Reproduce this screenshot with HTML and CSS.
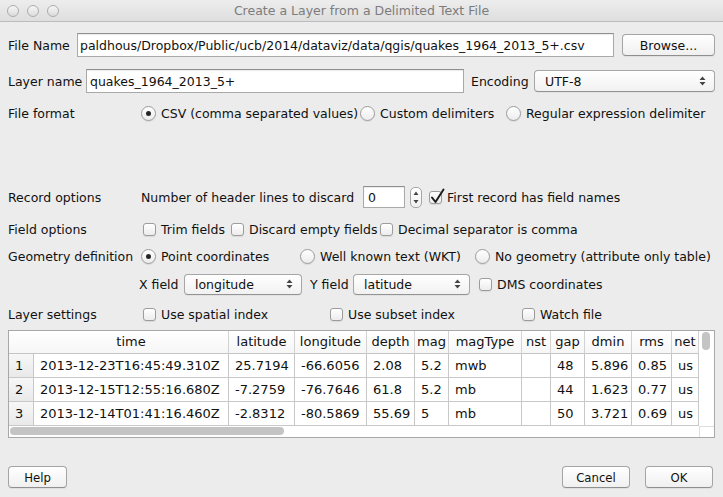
FILE: index.html
```html
<!DOCTYPE html>
<html>
<head>
<meta charset="utf-8">
<link rel="stylesheet" href="styles.css">
</head>
<body>
<div class="titlebar">
  <div class="lights"><span class="light"></span><span class="light"></span><span class="light"></span></div>
  <div class="title">Create a Layer from a Delimited Text File</div>
  <div></div>
</div>
<div class="content">
  <div class="row r-file">
    <span class="lbl lbl-file">File Name</span>
    <div class="input file-input"><span>paldhous/Dropbox/Public/ucb/2014/dataviz/data/qgis/quakes_1964_2013_5+.csv</span></div>
    <button class="btn browse">Browse...</button>
  </div>
  <div class="row r-layer">
    <span class="lbl lbl-layer">Layer name</span>
    <div class="input layer-input"><span>quakes_1964_2013_5+</span></div>
    <span class="lbl lbl-enc">Encoding</span>
    <div class="select enc-select"><span>UTF-8</span><svg class="updown" width="7" height="10" viewBox="0 0 7 10"><path d="M0.5 4 L3.5 0.5 L6.5 4 Z M0.5 6 L3.5 9.5 L6.5 6 Z"/></svg></div>
  </div>
  <div class="grow r-format">
    <span class="lbl">File format</span>
    <div class="opts">
      <div class="opt w-csv"><span class="radio on"></span>CSV (comma separated values)</div>
      <div class="opt w-custom"><span class="radio"></span>Custom delimiters</div>
      <div class="opt"><span class="radio"></span>Regular expression delimiter</div>
    </div>
  </div>
  <div class="grow r-record">
    <span class="lbl">Record options</span>
    <div class="opts">
      <span class="hdr-text">Number of header lines to discard</span>
      <div class="input spin-input"><span>0</span></div>
      <div class="spin-arrows"><svg width="10" height="19" viewBox="0 0 10 19"><path d="M2.5 7 L5 3.5 L7.5 7 Z M2.5 12 L5 15.5 L7.5 12 Z"/></svg></div>
      <div class="opt first-rec"><span class="check"><svg class="tick" width="16" height="18" viewBox="0 0 16 18"><path d="M3 9.5 L6.5 14 L14.5 1.5"/></svg></span>First record has field names</div>
    </div>
  </div>
  <div class="grow r-field">
    <span class="lbl">Field options</span>
    <div class="opts">
      <div class="opt w-trim"><span class="check"></span>Trim fields</div>
      <div class="opt w-discard"><span class="check"></span>Discard empty fields</div>
      <div class="opt"><span class="check"></span>Decimal separator is comma</div>
    </div>
  </div>
  <div class="grow r-geom">
    <span class="lbl">Geometry definition</span>
    <div class="opts">
      <div class="opt w-point"><span class="radio on"></span>Point coordinates</div>
      <div class="opt w-wkt"><span class="radio"></span>Well known text (WKT)</div>
      <div class="opt"><span class="radio"></span>No geometry (attribute only table)</div>
    </div>
  </div>
  <div class="grow r-xy">
    <span class="lbl"></span>
    <div class="opts xy-opts">
      <span class="xy-lbl">X field</span>
      <div class="select x-select"><span>longitude</span><svg class="updown" width="7" height="10" viewBox="0 0 7 10"><path d="M0.5 4 L3.5 0.5 L6.5 4 Z M0.5 6 L3.5 9.5 L6.5 6 Z"/></svg></div>
      <span class="xy-lbl y-lbl">Y field</span>
      <div class="select y-select"><span>latitude</span><svg class="updown" width="7" height="10" viewBox="0 0 7 10"><path d="M0.5 4 L3.5 0.5 L6.5 4 Z M0.5 6 L3.5 9.5 L6.5 6 Z"/></svg></div>
      <div class="opt dms"><span class="check"></span>DMS coordinates</div>
    </div>
  </div>
  <div class="grow r-layerset">
    <span class="lbl">Layer settings</span>
    <div class="opts">
      <div class="opt w-spatial"><span class="check"></span>Use spatial index</div>
      <div class="opt w-subset"><span class="check"></span>Use subset index</div>
      <div class="opt"><span class="check"></span>Watch file</div>
    </div>
  </div>
  <div class="table-wrap">
    <div class="grid">
      <div class="hc corner"></div>
      <div class="hc">time</div>
      <div class="hc">latitude</div>
      <div class="hc">longitude</div>
      <div class="hc">depth</div>
      <div class="hc">mag</div>
      <div class="hc">magType</div>
      <div class="hc">nst</div>
      <div class="hc">gap</div>
      <div class="hc">dmin</div>
      <div class="hc">rms</div>
      <div class="hc">net</div>

      <div class="rh">1</div>
      <div class="c">2013-12-23T16:45:49.310Z</div>
      <div class="c">25.7194</div>
      <div class="c">-66.6056</div>
      <div class="c">2.08</div>
      <div class="c">5.2</div>
      <div class="c">mwb</div>
      <div class="c"></div>
      <div class="c">48</div>
      <div class="c">5.896</div>
      <div class="c">0.85</div>
      <div class="c">us</div>

      <div class="rh">2</div>
      <div class="c">2013-12-15T12:55:16.680Z</div>
      <div class="c">-7.2759</div>
      <div class="c">-76.7646</div>
      <div class="c">61.8</div>
      <div class="c">5.2</div>
      <div class="c">mb</div>
      <div class="c"></div>
      <div class="c">44</div>
      <div class="c">1.623</div>
      <div class="c">0.77</div>
      <div class="c">us</div>

      <div class="rh">3</div>
      <div class="c">2013-12-14T01:41:16.460Z</div>
      <div class="c">-2.8312</div>
      <div class="c">-80.5869</div>
      <div class="c">55.69</div>
      <div class="c">5</div>
      <div class="c">mb</div>
      <div class="c"></div>
      <div class="c">50</div>
      <div class="c">3.721</div>
      <div class="c">0.69</div>
      <div class="c">us</div>
    </div>
    <div class="vscroll"><div class="vthumb"></div></div>
    <div class="hscroll"><div class="hthumb"></div></div>
    <div class="corner-box"></div>
  </div>
  <div class="actions">
    <button class="btn act help">Help</button>
    <div class="spacer"></div>
    <button class="btn act cancel">Cancel</button>
    <button class="btn act ok">OK</button>
  </div>
</div>
</body>
</html>
```
FILE: styles.css
```css
html, body {
  margin: 0;
  padding: 0;
}
body {
  width: 723px;
  height: 497px;
  overflow: hidden;
  background: #ececec;
  font-family: "DejaVu Sans", "Liberation Sans", sans-serif;
  font-size: 12.5px;
  color: #111;
}

/* title bar */
.titlebar {
  height: 21px;
  border-bottom: 1px solid #bcbcbc;
  background: linear-gradient(#ededed, #dedede);
  display: grid;
  grid-template-columns: 1fr auto 1fr;
  align-items: center;
}
.lights {
  display: flex;
  gap: 8px;
  padding-left: 7px;
}
.light {
  width: 12px;
  height: 12px;
  box-sizing: border-box;
  border-radius: 50%;
  border: 1px solid #acacac;
  background: linear-gradient(#f6f6f6, #dcdcdc);
}
.title {
  color: #7c7c7c;
  font-size: 12.5px;
}

/* content */
.content {
  padding: 0 8px;
  display: flex;
  flex-direction: column;
}
.row {
  display: flex;
  align-items: center;
}
.grow {
  display: grid;
  grid-template-columns: 133px 1fr;
  align-items: center;
}
.lbl {
  white-space: nowrap;
}
.opts {
  display: flex;
  align-items: center;
  white-space: nowrap;
}
.opt {
  display: flex;
  align-items: center;
  flex: none;
}

.r-file { margin-top: 11px; height: 24px; }
.r-layer { margin-top: 12px; height: 24px; }
.r-format { margin-top: 10px; height: 20px; }
.r-record { margin-top: 63px; height: 22px; }
.r-field { margin-top: 11px; height: 20px; }
.r-geom { margin-top: 7px; height: 20px; }
.r-xy { margin-top: 7px; height: 22px; }
.r-layerset { margin-top: 9px; height: 20px; }

/* inputs */
.input {
  box-sizing: border-box;
  background: #fff;
  border: 1px solid #a9a9a9;
  border-top-color: #8f8f8f;
  box-shadow: inset 0 1px 1px rgba(0, 0, 0, 0.08);
  display: flex;
  align-items: center;
  overflow: hidden;
  white-space: nowrap;
}
.lbl-file { width: 69px; flex: none; }
.file-input {
  flex: 1;
  height: 24px;
  padding-left: 2px;
}
.browse {
  margin-left: 8px;
  width: 93px;
  height: 22px;
  flex: none;
}
.lbl-layer { width: 78px; flex: none; }
.layer-input {
  width: 378px;
  flex: none;
  height: 24px;
  padding-left: 3px;
}
.lbl-enc {
  margin-left: 7px;
  width: 63px;
  flex: none;
}
.enc-select {
  flex: 1;
}

/* select / popup button */
.select {
  box-sizing: border-box;
  height: 22px;
  border: 1px solid #a6a6a6;
  border-bottom-color: #939393;
  border-radius: 4px;
  background: linear-gradient(#ffffff, #f1f1f1);
  box-shadow: 0 1px 0 rgba(0, 0, 0, 0.04);
  display: flex;
  align-items: center;
  justify-content: space-between;
  padding: 0 8px 0 10px;
  white-space: nowrap;
}
.updown path {
  fill: #444;
}

/* radio / check */
.radio {
  width: 15px;
  height: 15px;
  box-sizing: border-box;
  border-radius: 50%;
  border: 1px solid #9c9c9c;
  background: linear-gradient(#ffffff, #ececec);
  box-shadow: 0 1px 1px rgba(0, 0, 0, 0.08);
  margin-right: 5px;
  display: flex;
  align-items: center;
  justify-content: center;
  flex: none;
}
.radio.on::after {
  content: "";
  width: 5px;
  height: 5px;
  border-radius: 50%;
  background: #262626;
}
.check {
  position: relative;
  width: 13px;
  height: 13px;
  box-sizing: border-box;
  border-radius: 3px;
  border: 1px solid #9c9c9c;
  background: linear-gradient(#ffffff, #ececec);
  box-shadow: 0 1px 1px rgba(0, 0, 0, 0.08);
  margin: 0 5px 0 2px;
  flex: none;
}
.tick {
  position: absolute;
  left: -1px;
  top: -4px;
}
.tick path {
  fill: none;
  stroke: #1e1e1e;
  stroke-width: 2;
  stroke-linecap: round;
  stroke-linejoin: round;
}

/* option widths */
.w-csv { width: 219px; }
.w-custom { width: 146px; }
.w-trim { width: 88px; }
.w-discard { width: 149px; }
.w-point { width: 159px; }
.w-wkt { width: 175px; }
.w-spatial { width: 187px; }
.w-subset { width: 192px; }

.hdr-text {
  width: 222px;
  flex: none;
}
.spin-input {
  width: 42px;
  height: 22px;
  padding-left: 4px;
  flex: none;
}
.spin-arrows {
  margin-left: 5px;
  width: 12px;
  height: 21px;
  box-sizing: border-box;
  border: 1px solid #a6a6a6;
  border-radius: 5px;
  background: linear-gradient(#ffffff, #efefef);
  display: flex;
  align-items: center;
  justify-content: center;
  flex: none;
}
.spin-arrows path {
  fill: #444;
}
.first-rec {
  margin-left: 5px;
}

.xy-opts {
  margin-left: -2px;
}
.xy-lbl {
  width: 45px;
  flex: none;
}
.y-lbl {
  margin-left: 8px;
  width: 43px;
}
.x-select {
  width: 118px;
  flex: none;
  height: 21px;
}
.y-select {
  width: 117px;
  flex: none;
  height: 21px;
}
.dms {
  margin-left: 7px;
}

/* table */
.table-wrap {
  margin-top: 6px;
  box-sizing: border-box;
  height: 108px;
  border: 1px solid #a8a8a8;
  background: #fff;
  display: grid;
  grid-template-columns: 690px 15px;
  grid-template-rows: 95px 11px;
  font-size: 13px;
}
.grid {
  display: grid;
  grid-template-columns: 25px 195px 66px 72px 48px 34px 73px 29px 34px 47px 40px 27px;
  grid-template-rows: 23px 24px 24px 24px;
  overflow: hidden;
}
.hc {
  box-sizing: border-box;
  border-right: 1px solid #d2d2d2;
  border-bottom: 1px solid #c4c4c4;
  background: linear-gradient(#ffffff, #f6f6f6);
  text-align: center;
  line-height: 22px;
  white-space: nowrap;
  overflow: hidden;
}
.hc.corner {
  border-right: none;
}
.hc:last-child {
  border-right: none;
}
.rh {
  box-sizing: border-box;
  border-right: 1px solid #c8c8c8;
  border-bottom: 1px solid #c8c8c8;
  background: linear-gradient(#f7f7f7, #e9e9e9);
  padding-left: 6px;
  line-height: 24px;
}
.c {
  box-sizing: border-box;
  border-right: 1px solid #c8c8c8;
  border-bottom: 1px solid #c8c8c8;
  padding-left: 6px;
  line-height: 24px;
  white-space: nowrap;
  overflow: hidden;
}
.vscroll {
  grid-column: 2;
  grid-row: 1;
  background: #fff;
  padding: 1px 0 0 3px;
}
.vthumb {
  width: 8px;
  height: 18px;
  border-radius: 4px;
  background: #c4c4c4;
}
.hscroll {
  grid-column: 1;
  grid-row: 2;
  background: #fff;
  padding: 1px 0 0 1px;
}
.hthumb {
  width: 274px;
  height: 8px;
  border-radius: 4px;
  background: #c4c4c4;
}
.corner-box {
  grid-column: 2;
  grid-row: 2;
  box-sizing: border-box;
  border-top: 1px solid #dedede;
  border-left: 1px solid #dedede;
  background: #fff;
}

/* buttons */
.btn {
  box-sizing: border-box;
  border: 1px solid #a4a4a4;
  border-bottom-color: #8f8f8f;
  border-radius: 4px;
  background: linear-gradient(#ffffff, #f0f0f0);
  box-shadow: 0 1px 0 rgba(0, 0, 0, 0.05);
  font-family: inherit;
  font-size: 12.5px;
  color: #111;
  padding: 0;
}
.actions {
  margin-top: 28px;
  height: 22px;
  display: flex;
}
.act {
  height: 22px;
  font-family: "DejaVu Sans Condensed", "Liberation Sans Narrow", "Liberation Sans", sans-serif;
  font-stretch: condensed;
  font-size: 13px;
}
.help { width: 59px; }
.spacer { flex: 1; }
.cancel { width: 68px; }
.ok { width: 68px; margin-left: 15px; margin-right: 2px; }
```
